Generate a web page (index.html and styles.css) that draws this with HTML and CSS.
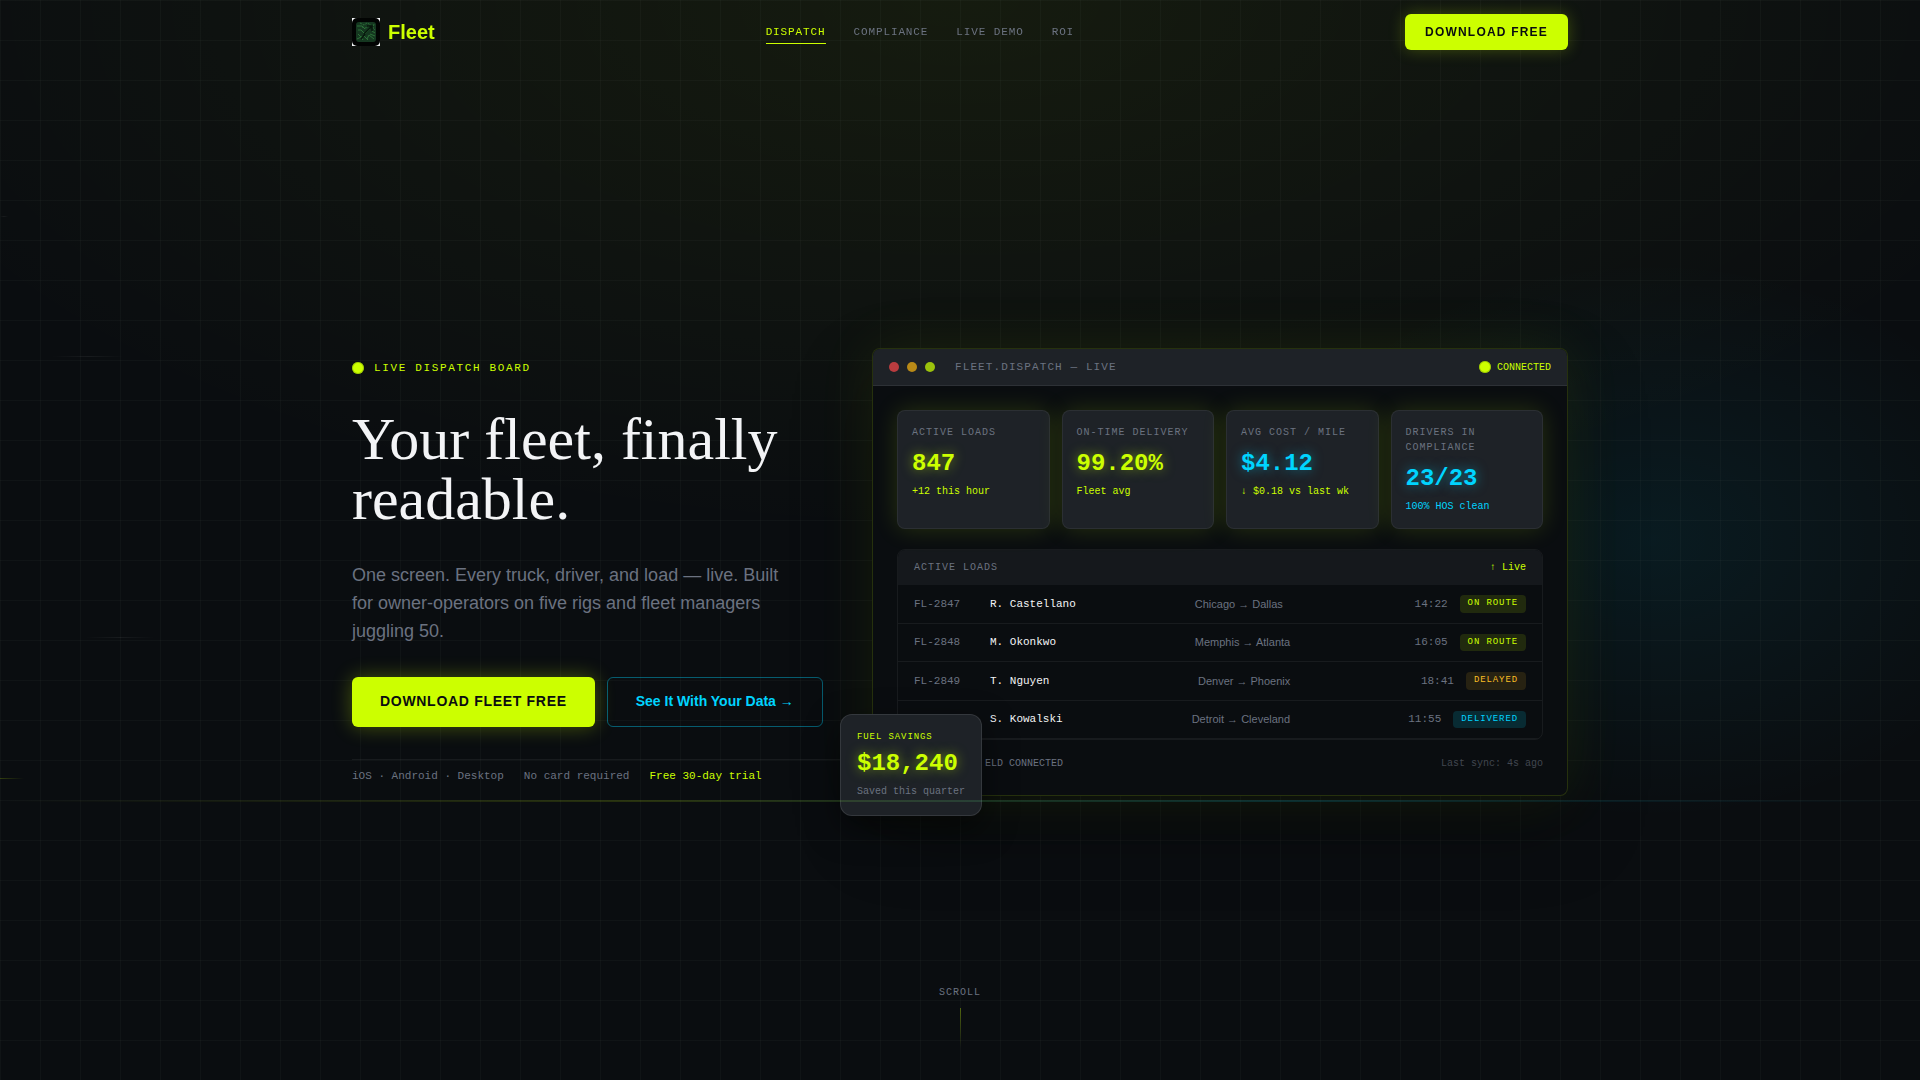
FILE: index.html
```html
<!DOCTYPE html>
<html lang="en">
<head>
	<meta charset="UTF-8">
	<meta name="viewport" content="width=device-width, initial-scale=1">
	<title>Fleet</title>
	<link rel="stylesheet" href="styles.css">
</head>
<body>
<header class="header">
	<div class="container header-row">
		<a class="logo" href="#">
			<svg width="28" height="28" viewBox="0 0 28 28" aria-hidden="true">
				<rect width="28" height="28" fill="#f2f4f6"/>
				<rect width="28" height="28" rx="5" fill="#020403"/>
				<rect x="4" y="4" width="20" height="20" rx="3" fill="#153720"/>
				<g fill="none" stroke="#2c7038" stroke-width="1">
					<path d="M5 8h5l3 3M6 12h3l4 4 5-5M6 16l3 3 3-1 4 4M5 21l4-2 2 3M15 21l2-4 5 4M18 16l5 2M20 13l3 2"/>
					<path d="M8 5l4 2 3-2 4 2M10 9l4 1 3-2M22 6l-1 4 2 2" stroke-dasharray="2 1"/>
				</g>
				<path d="M12 16l8-8M15 8h5v5M9 21l4-5" fill="none" stroke="#07170c" stroke-width="1.5"/>
			</svg>
			<span>Fleet</span>
		</a>
		<nav class="nav">
			<a class="active" href="#dispatch">DISPATCH</a>
			<a href="#compliance">COMPLIANCE</a>
			<a href="#demo">LIVE DEMO</a>
			<a href="#roi">ROI</a>
		</nav>
		<button class="btn btn-small" type="button">DOWNLOAD FREE</button>
	</div>
</header>

<main class="hero" id="dispatch">
	<div class="streak streak-1"></div>
	<div class="streak streak-2"></div>
	<div class="streak streak-3"></div>
	<div class="streak streak-4"></div>
	<div class="container hero-grid">
		<section class="intro">
			<p class="eyebrow"><i class="dot"></i>LIVE DISPATCH BOARD</p>
			<h1>Your fleet, finally readable.</h1>
			<p class="lead">One screen. Every truck, driver, and load — live. Built for owner-operators on five rigs and fleet managers juggling 50.</p>
			<div class="actions">
				<button class="btn" type="button">DOWNLOAD FLEET FREE</button>
				<a class="btn-outline" href="#demo">See It With Your Data →</a>
			</div>
			<div class="meta">
				<span>iOS · Android · Desktop</span>
				<span>No card required</span>
				<span class="lime">Free 30-day trial</span>
			</div>
		</section>

		<section class="board">
			<div class="panel">
				<div class="panel-bar">
					<i class="light red"></i>
					<i class="light amber"></i>
					<i class="light green"></i>
					<span class="panel-title">FLEET.DISPATCH — LIVE</span>
					<span class="connected"><i class="dot"></i>CONNECTED</span>
				</div>
				<div class="panel-body">
					<div class="stats">
						<div class="stat">
							<p class="label">ACTIVE LOADS</p>
							<p class="value">847</p>
							<p class="note">+12 this hour</p>
						</div>
						<div class="stat">
							<p class="label">ON-TIME DELIVERY</p>
							<p class="value">99.20%</p>
							<p class="note">Fleet avg</p>
						</div>
						<div class="stat">
							<p class="label">AVG COST / MILE</p>
							<p class="value cyan">$4.12</p>
							<p class="note">↓ $0.18 vs last wk</p>
						</div>
						<div class="stat">
							<p class="label">DRIVERS IN COMPLIANCE</p>
							<p class="value cyan">23/23</p>
							<p class="note cyan">100% HOS clean</p>
						</div>
					</div>
					<div class="loads">
						<div class="loads-head">
							<span class="label" id="loads-title">ACTIVE LOADS</span>
							<span class="note">↑ Live</span>
						</div>
						<table aria-labelledby="loads-title">
							<tbody>
								<tr>
									<td class="id">FL-2847</td>
									<td class="driver">R. Castellano</td>
									<td class="route">Chicago → Dallas</td>
									<td class="time">14:22</td>
									<td class="badge">ON ROUTE</td>
								</tr>
								<tr>
									<td class="id">FL-2848</td>
									<td class="driver">M. Okonkwo</td>
									<td class="route">Memphis → Atlanta</td>
									<td class="time">16:05</td>
									<td class="badge">ON ROUTE</td>
								</tr>
								<tr>
									<td class="id">FL-2849</td>
									<td class="driver">T. Nguyen</td>
									<td class="route">Denver → Phoenix</td>
									<td class="time">18:41</td>
									<td class="badge delayed">DELAYED</td>
								</tr>
								<tr>
									<td class="id"></td>
									<td class="driver">S. Kowalski</td>
									<td class="route">Detroit → Cleveland</td>
									<td class="time">11:55</td>
									<td class="badge delivered">DELIVERED</td>
								</tr>
							</tbody>
						</table>
					</div>
					<div class="panel-foot">
						<span class="eld">ELD CONNECTED</span>
						<span class="sync">Last sync: 4s ago</span>
					</div>
				</div>
			</div>
			<aside class="savings">
				<p class="savings-label">FUEL SAVINGS</p>
				<p class="value">$18,240</p>
				<p class="savings-note">Saved this quarter</p>
			</aside>
		</section>
	</div>
	<div class="scanline"></div>
	<a class="scroll" href="#compliance">SCROLL<i></i></a>
</main>
</body>
</html>
```

FILE: styles.css
```css
:root {
  --bg: #0a0d10;
  --lime: #ccff00;
  --cyan: #00d4ff;
  --amber: #fbbf24;
  --gray: #6b7280;
  --card: #1e2227;
  --sans: "Liberation Sans", Arial, sans-serif;
  --mono: "Liberation Mono", "Courier New", monospace;
}

* { margin: 0; padding: 0; box-sizing: border-box; }

body {
  background: var(--bg);
  color: #f3f4f6;
  font-family: var(--sans);
  line-height: 1.5;
}
a { text-decoration: none; }

.container {
  width: 100%;
  max-width: 1280px;
  margin: 0 auto;
  padding: 0 32px;
}
.lime { color: var(--lime); }
.dot {
  width: 12px;
  height: 12px;
  border-radius: 50%;
  background: var(--lime);
  box-shadow: inset 0 0 0 1px rgba(120,160,0,0.5);
}

/* header */
.header {
  position: fixed;
  top: 0;
  left: 0;
  right: 0;
  z-index: 10;
}
.header-row {
  display: flex;
  align-items: center;
  justify-content: space-between;
  height: 64px;
}
.logo {
  display: flex;
  align-items: center;
  gap: 8px;
  color: var(--lime);
  font-size: 20px;
  font-weight: 700;
}
.nav {
  display: flex;
  gap: 28px;
  font-family: var(--mono);
  font-size: 11px;
  letter-spacing: 0.08em;
}
.nav a {
  color: var(--gray);
  padding: 4px 0 2px;
  border-bottom: 1px solid transparent;
}
.nav .active { color: var(--lime); border-color: var(--lime); }

.btn {
  height: 50px;
  padding: 0 28px 2px;
  border: 0;
  border-radius: 6px;
  background: var(--lime);
  color: #0a0d10;
  font-family: var(--sans);
  font-size: 14px;
  font-weight: 700;
  letter-spacing: 0.05em;
  box-shadow: 0 0 20px rgba(204,255,0,0.3);
  cursor: pointer;
}
.btn-small {
  height: 36px;
  padding: 0 20px;
  font-size: 12px;
  letter-spacing: 0.1em;
  box-shadow: 0 0 16px rgba(204,255,0,0.25);
}

/* hero */
.hero {
  position: relative;
  display: flex;
  align-items: center;
  min-height: 100vh;
  padding-top: 64px;
  overflow: hidden;
  background:
    linear-gradient(rgba(220,255,220,0.028) 1px, transparent 1px) 0 0 / 40px 40px,
    linear-gradient(90deg, rgba(220,255,220,0.028) 1px, transparent 1px) 0 0 / 40px 40px,
    radial-gradient(ellipse 60% 50% at 50% 0, rgba(204,255,0,0.06), transparent),
    radial-gradient(ellipse 20% 26% at 86% 50%, rgba(0,212,255,0.07), transparent);
}
.hero-grid {
  display: grid;
  grid-template-columns: repeat(12, 1fr);
  gap: 32px;
  align-items: center;
}
.intro { grid-column: span 5; }
.board { grid-column: span 7; position: relative; }

.eyebrow {
  display: flex;
  align-items: center;
  gap: 10px;
  margin-bottom: 32px;
  color: var(--lime);
  font-family: var(--mono);
  font-size: 11px;
  letter-spacing: 0.15em;
}
h1 {
  margin-bottom: 32px;
  font-family: "Liberation Serif", "Times New Roman", serif;
  font-size: 60px;
  font-weight: 400;
  line-height: 60px;
}
.lead {
  max-width: 448px;
  margin-bottom: 32px;
  color: var(--gray);
  font-size: 18px;
  line-height: 28px;
}
.actions { display: flex; gap: 12px; margin-bottom: 32px; }
.btn-outline {
  display: flex;
  align-items: center;
  height: 50px;
  padding: 0 28px;
  border: 1px solid rgba(0,212,255,0.4);
  border-radius: 6px;
  color: var(--cyan);
  font-size: 14px;
  font-weight: 700;
  white-space: nowrap;
}
.meta {
  display: flex;
  gap: 20px;
  padding-top: 8px;
  border-top: 1px solid rgba(255,255,255,0.06);
  color: var(--gray);
  font-family: var(--mono);
  font-size: 11px;
}

/* dispatch panel */
.panel {
  overflow: hidden;
  border: 1px solid rgba(204,255,0,0.15);
  border-radius: 8px;
  background: var(--bg);
  font-family: var(--mono);
  font-size: 10px;
  box-shadow: 0 0 60px rgba(204,255,0,0.08), 0 32px 80px rgba(0,0,0,0.3);
}
.panel-bar {
  display: flex;
  align-items: center;
  gap: 8px;
  height: 37px;
  padding: 0 16px;
  border-bottom: 1px solid rgba(255,255,255,0.07);
  background: var(--card);
}
.light { width: 10px; height: 10px; border-radius: 50%; }
.red { background: #b93c3f; }
.amber { background: #b98a17; }
.green { background: #9bc20c; }
.panel-title {
  margin-left: 12px;
  color: var(--gray);
  font-size: 11px;
  letter-spacing: 0.1em;
}
.connected {
  display: flex;
  align-items: center;
  gap: 6px;
  margin-left: auto;
  color: var(--lime);
}
.panel-body { padding: 24px; }
.stats {
  display: grid;
  grid-template-columns: repeat(4, 1fr);
  gap: 12px;
  margin-bottom: 20px;
}
.stat {
  padding: 14px;
  border: 1px solid rgba(255,255,255,0.06);
  border-radius: 8px;
  background: var(--card);
  box-shadow: 0 0 24px rgba(204,255,0,0.15);
}
.label { color: var(--gray); letter-spacing: 0.1em; }
.value {
  margin: 10px 0 6px;
  color: var(--lime);
  font-family: var(--mono);
  font-size: 24px;
  font-weight: 700;
  line-height: 28px;
  text-shadow: 0 0 12px rgba(204,255,0,0.5);
}
.value.cyan { color: var(--cyan); text-shadow: 0 0 12px rgba(0,212,255,0.5); }
.note { color: var(--lime); }
.note.cyan { color: var(--cyan); }

.loads {
  overflow: hidden;
  border: 1px solid rgba(255,255,255,0.06);
  border-radius: 8px;
}
.loads-head {
  display: flex;
  justify-content: space-between;
  padding: 10px 16px;
  background: #15181c;
}
table, tbody { display: block; }
tr {
  display: flex;
  align-items: center;
  gap: 12px;
  padding: 10px 16px;
  border-bottom: 1px solid rgba(255,255,255,0.06);
  color: var(--gray);
  font-size: 11px;
}
.id { width: 64px; }
.driver { flex: 1; color: #f3f4f6; }
.route { flex: 1; font-family: var(--sans); }
.time { width: 48px; text-align: right; }
.badge {
  padding: 2px 8px;
  border-radius: 4px;
  background: rgba(204,255,0,0.12);
  color: var(--lime);
  font-size: 9px;
  letter-spacing: 0.1em;
}
.delayed { background: rgba(251,191,36,0.12); color: var(--amber); }
.delivered { background: rgba(0,212,255,0.15); color: var(--cyan); }

.panel-foot {
  display: flex;
  justify-content: space-between;
  margin-top: 16px;
  padding-left: 88px;
  color: var(--gray);
}
.sync { color: #41464f; }

.savings {
  position: absolute;
  left: -32px;
  bottom: -20px;
  padding: 16px;
  border: 1px solid rgba(255,255,255,0.1);
  border-radius: 12px;
  background: var(--card);
  color: var(--gray);
  font-family: var(--mono);
  font-size: 10px;
  box-shadow: 0 12px 32px rgba(0,0,0,0.5);
}
.savings-label { color: var(--lime); font-size: 9px; letter-spacing: 0.1em; }
.savings .value { margin: 6px 0; }

/* lines over the background */
.scanline {
  position: absolute;
  top: 800px;
  left: 0;
  right: 0;
  height: 2px;
  background: linear-gradient(90deg, transparent, var(--lime), var(--cyan), transparent);
  opacity: 0.15;
}
.streak {
  position: absolute;
  height: 1px;
  background: linear-gradient(90deg, transparent, rgba(255,255,255,0.06), transparent);
}
.streak-1 { top: 216px; left: 0; width: 8px; }
.streak-2 { top: 356px; left: 52px; width: 72px; }
.streak-3 { top: 637px; left: 86px; width: 68px; }
.streak-4 { top: 778px; left: 0; width: 24px; background: linear-gradient(90deg, rgba(204,255,0,0.2), transparent); }

.scroll {
  position: absolute;
  left: 0;
  right: 0;
  bottom: 32px;
  display: flex;
  flex-direction: column;
  align-items: center;
  gap: 8px;
  color: var(--gray);
  font-family: var(--mono);
  font-size: 10px;
  letter-spacing: 0.1em;
}
.scroll i {
  width: 1px;
  height: 40px;
  background: linear-gradient(rgba(204,255,0,0.35), transparent);
}
```
